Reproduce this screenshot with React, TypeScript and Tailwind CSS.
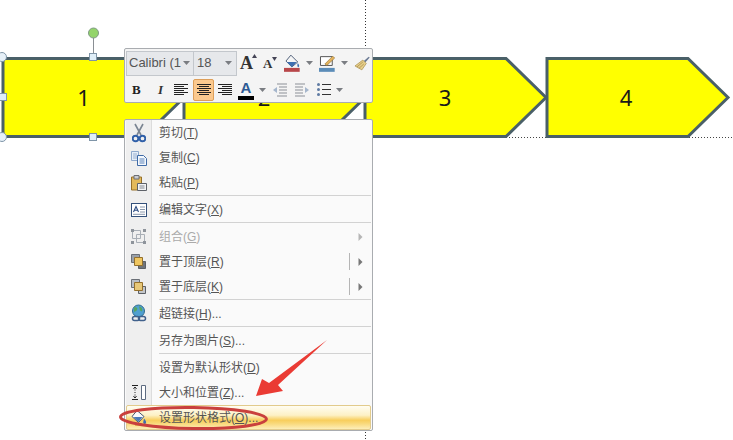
const cjk = { fontFamily: '"Liberation Sans", "Noto Sans CJK SC", sans-serif' }

type MenuItem = {
  label: string
  key: string
  suffix?: string
  icon?: React.ReactNode
  disabled?: boolean
  submenu?: boolean
  split?: boolean
  sep?: boolean
  active?: boolean
}

function CutIcon() {
  return (
    <svg width="14" height="20" viewBox="0 0 14 20">
      <path d="M3 1 L9 12 M11 1 L5 12" stroke="#7b8592" strokeWidth="1.600" fill="none" />
      <circle cx="3.500" cy="15.500" r="2.800" fill="none" stroke="#2f5fa8" strokeWidth="1.900" />
      <circle cx="10.500" cy="15.500" r="2.800" fill="none" stroke="#2f5fa8" strokeWidth="1.900" />
    </svg>
  )
}

function CopyIcon() {
  return (
    <svg width="18" height="16" viewBox="0 0 18 16">
      <path d="M1.500 1.500h7v9h-7z" fill="#e6eef8" stroke="#8fa9cc" />
      <path d="M3 4h4M3 6h4M3 8h4" stroke="#9ab0d0" />
      <path d="M7.500 5.500h6l3 3v7h-9z" fill="#f4f8fd" stroke="#3f6aa6" />
      <path d="M9.500 9h5M9.500 11h5M9.500 13h5" stroke="#5b82b8" />
    </svg>
  )
}

function PasteIcon() {
  return (
    <svg width="18" height="18" viewBox="0 0 18 18">
      <path d="M1.500 3h10v13h-10z" fill="#e3b95a" stroke="#96702a" />
      <path d="M4 1.500h5v3.500h-5z" fill="#c9ccd2" stroke="#6d6f74" />
      <path d="M7.500 9.500h9v7h-9z" fill="#f3f4f6" stroke="#5d6168" />
      <path d="M9.500 12h5M9.500 14h5" stroke="#858a92" />
    </svg>
  )
}

function EditTextIcon() {
  return (
    <svg width="16" height="14" viewBox="0 0 16 14">
      <rect x="0.500" y="0.500" width="15" height="13" fill="#fff" stroke="#33507a" />
      <path d="M2.500 9 L5 3.500 L7.500 9 M3.400 7.200h3.200" stroke="#2c4c82" strokeWidth="1.100" fill="none" />
      <path d="M9 4h5M9 6.500h5M9 9h5M2 11.300h12" stroke="#8a98ac" />
    </svg>
  )
}

function GroupIcon() {
  return (
    <svg width="17" height="17" viewBox="0 0 17 17">
      <path d="M2.500 2.500h8v8h-8zM6.500 6.500h8v8h-8z" fill="none" stroke="#a9afb6" />
      <path d="M1 1h3v3H1zM13 1h3v3h-3zM1 13h3v3H1zM13 13h3v3h-3z" fill="#8e949b" />
    </svg>
  )
}

function LayerIcon({ front }: { front: boolean }) {
  const a = <path d="M1.500 1.500h8v8h-8z" fill={front ? '#9aa0a8' : '#b9bec6'} stroke="#6a6f76" />
  const b = <path d="M4.500 4.500h8v8h-8z" fill={front ? '#efc660' : '#e8c878'} stroke="#94702c" />
  const c = <path d="M8.500 8.500h7v7h-7z" fill={front ? '#6f747b' : '#c3c6ca'} stroke="#5c6066" />
  return (
    <svg width="17" height="17" viewBox="0 0 17 17">
      {front ? a : c}
      {front ? c : a}
      {b}
    </svg>
  )
}

function LinkIcon() {
  return (
    <svg width="18" height="19" viewBox="0 0 18 19">
      <circle cx="8.500" cy="7" r="6" fill="#4f9fd0" stroke="#2f6b90" />
      <path d="M4 3.500c2.500-1 4 .5 3 2.500s-3 .5-3 3.500zM9 2.500c2.500 0 4 2.500 3 5l-2-1z" fill="#57a55e" />
      <rect x="2.500" y="12.500" width="7" height="4" rx="2" fill="none" stroke="#41618c" strokeWidth="1.500" />
      <rect x="8.500" y="12.500" width="7" height="4" rx="2" fill="none" stroke="#41618c" strokeWidth="1.500" />
    </svg>
  )
}

function SizeIcon() {
  return (
    <svg width="16" height="17" viewBox="0 0 16 17">
      <path d="M10.500 1.500h4v14h-4z" fill="#fff" stroke="#5d6b80" />
      <path d="M4 3v11" stroke="#222" strokeDasharray="1 1.500" />
      <path d="M1 1.500h6M1 15.500h6M2.500 5L4 3l1.500 2M2.500 12L4 14l1.500-2" stroke="#222" fill="none" />
    </svg>
  )
}

function FormatIcon() {
  return (
    <svg width="18" height="18" viewBox="0 0 18 18">
      <path d="M7 1.500 L14 7.500 L8.500 13.500 L2 7.500z" fill="#f8fafc" stroke="#46566e" />
      <path d="M3.500 8 L8.500 13 L12.500 8z" fill="#4a7ab8" />
      <path d="M14 9.500c1.500 2 2.500 3 2 4.500s-3 1-2.800-.8z" fill="#3f6fb0" />
      <path d="M5 15.500h7" stroke="#c8901c" strokeWidth="2" />
    </svg>
  )
}

const menu: MenuItem[] = [
  { label: '剪切', key: 'T', icon: <CutIcon /> },
  { label: '复制', key: 'C', icon: <CopyIcon /> },
  { label: '粘贴', key: 'P', icon: <PasteIcon />, sep: true },
  { label: '编辑文字', key: 'X', icon: <EditTextIcon />, sep: true },
  { label: '组合', key: 'G', icon: <GroupIcon />, disabled: true, submenu: true },
  { label: '置于顶层', key: 'R', icon: <LayerIcon front />, submenu: true, split: true },
  { label: '置于底层', key: 'K', icon: <LayerIcon front={false} />, submenu: true, split: true, sep: true },
  { label: '超链接', key: 'H', suffix: '...', icon: <LinkIcon />, sep: true },
  { label: '另存为图片', key: 'S', suffix: '...', sep: true },
  { label: '设置为默认形状', key: 'D' },
  { label: '大小和位置', key: 'Z', suffix: '...', icon: <SizeIcon /> },
  { label: '设置形状格式', key: 'O', suffix: '...', icon: <FormatIcon />, active: true },
]

function ContextMenu() {
  return (
    <div
      style={cjk}
      className="absolute left-[124px] top-[119px] w-[249px] px-px bg-[#fafafa] border border-[#a9acb0] rounded-[2px] flex flex-col"
    >
      {menu.map(item => (
        <div key={item.key}>
          <div className="flex h-[25px] relative">
            <div className="w-[26px] shrink-0 bg-[#efefef] border-r border-[#dcdcdc] flex items-center justify-center">
              {item.icon}
            </div>
            {item.active && (
              <div className="absolute inset-0 border border-[#e2cb8c] rounded-[2px] bg-[linear-gradient(to_bottom,#fffdf2_0%,#fdf1c6_40%,#f8ce5c_62%,#f9d878_75%,#fdeeb8_100%)]" />
            )}
            {item.active && (
              <div className="absolute left-0 top-0 h-full w-[26px] flex items-center justify-center">{item.icon}</div>
            )}
            <div
              className={`relative flex-1 flex items-center pl-[7px] text-[12px] ${
                item.disabled ? 'text-[#aaaaaa]' : 'text-[#555555]'
              }`}
            >
              <span>
                {item.label}(<span className="underline">{item.key}</span>){item.suffix}
              </span>
              {item.split && <div className="absolute right-[21px] top-[4px] h-[17px] w-px bg-[#b5b5b5]" />}
              {item.submenu && (
                <svg className="absolute right-[8px] top-[9px]" width="5" height="8" viewBox="0 0 5 8">
                  <path d="M0.500 0 L4.500 4 L0.500 8z" fill={item.disabled ? '#b5b5b5' : '#777'} />
                </svg>
              )}
            </div>
          </div>
          {item.sep && (
            <div className="flex h-[2px]">
              <div className="w-[26px] shrink-0 bg-[#efefef] border-r border-[#dcdcdc]" />
              <div className="flex-1 ml-[7px] bg-[#d2d2d2] h-px" />
            </div>
          )}
        </div>
      ))}
    </div>
  )
}

function Caret() {
  return (
    <svg width="7" height="4" viewBox="0 0 7 4" className="shrink-0">
      <path d="M0 0h7L3.500 4z" fill="#7a7d82" />
    </svg>
  )
}

function AlignIcon({ mode }: { mode: 'left' | 'center' | 'right' }) {
  const widths = [14, 10, 14, 10, 14, 10]
  return (
    <svg width="14" height="12" viewBox="0 0 14 12">
      {widths.map((w, i) => {
        const x = mode === 'left' ? 0 : mode === 'right' ? 14 - w : (14 - w) / 2
        return <rect key={i} x={x} y={i * 2} width={w} height="1" fill="#222" />
      })}
    </svg>
  )
}

function IndentIcon({ flip }: { flip?: boolean }) {
  return (
    <svg width="15" height="14" viewBox="0 0 15 14" style={flip ? { transform: 'scaleX(-1)' } : undefined}>
      <path d="M5 1h10M7 4h8M7 7h8M7 10h8M5 13h10" stroke="#8c9097" />
      <path d="M5 4 L1 7 L5 10z" fill="#a5b6cc" />
    </svg>
  )
}

function MiniToolbar() {
  return (
    <div
      style={cjk}
      className="absolute left-[124px] top-[48px] w-[249px] h-[55px] bg-[#f4f4f4] border border-[#a9acb0] rounded-[2px] px-[1px] pt-[1px] flex flex-col"
    >
      <div className="flex items-center h-[26px]">
        <div className="flex items-center justify-between shrink-0 w-[68px] h-[25px] bg-[#e6e8eb] border border-[#c3c7cc] pl-[2px] pr-[3px] text-[13px] text-[#555]">
          <span className="whitespace-nowrap">Calibri (1</span>
          <Caret />
        </div>
        <div className="flex items-center justify-between shrink-0 w-[43px] h-[25px] bg-[#e6e8eb] border border-l-0 border-[#c3c7cc] pl-[3px] pr-[4px] text-[13px] text-[#555]">
          <span>18</span>
          <Caret />
        </div>
        <div className="flex items-center ml-[3px]" style={{ fontFamily: '"Liberation Serif", serif' }}>
          <span className="relative w-[17px] text-[18px] font-bold text-[#333] leading-none">
            A
            <svg className="absolute right-0 top-0" width="5" height="4" viewBox="0 0 5 4"><path d="M2.500 0L5 4H0z" fill="#445" /></svg>
          </span>
          <span className="relative w-[14px] ml-[6px] text-[13px] font-bold text-[#333] leading-none">
            A
            <svg className="absolute right-0 top-0" width="5" height="4" viewBox="0 0 5 4"><path d="M0 0h5L2.500 4z" fill="#445" /></svg>
          </span>
        </div>
        <svg className="ml-[7px]" width="17" height="18" viewBox="0 0 17 18">
          <path d="M7 1 L14 8 L8 13 L2 7z" fill="#f5f5f5" stroke="#4f5f78" />
          <path d="M3 8 L8 13 L13 8z" fill="#3e6fb0" />
          <path d="M14 9c1.500 2 2 3 1 4s-2-1-1-4z" fill="#3e6fb0" />
          <rect x="0" y="14" width="16" height="4" fill="#b8474a" />
        </svg>
        <div className="ml-[5px]"><Caret /></div>
        <svg className="ml-[6px]" width="17" height="18" viewBox="0 0 17 18">
          <path d="M1.500 2.500h12v9h-12z" fill="#fff" stroke="#555" />
          <path d="M6 10 L14 2 L16 4 L8 11.500z" fill="#e4b35c" stroke="#8a6a2a" strokeWidth="0.600" />
          <rect x="0" y="14" width="16" height="4" fill="#5b8cb8" />
        </svg>
        <div className="ml-[6px]"><Caret /></div>
        <svg className="ml-[6px]" width="17" height="17" viewBox="0 0 17 17">
          <path d="M10 6 L15 1.500 L16 2.500 L11.500 7.500z" fill="#6b7a94" />
          <path d="M9 5 L12.500 8.500 L8 15 L1 11z" fill="#e6cf8a" stroke="#a58a48" strokeWidth="0.700" />
          <path d="M3 12 L9 7M5 13.500 L10 9" stroke="#b89a58" />
        </svg>
      </div>
      <div className="flex items-center h-[25px] mt-[1px]">
        <span className="w-[19px] ml-[6px] text-[13px] font-bold text-[#222] leading-none" style={{ fontFamily: '"Liberation Serif", serif' }}>B</span>
        <span className="w-[14px] ml-[7px] text-[13px] italic font-bold text-[#333] leading-none" style={{ fontFamily: '"Liberation Serif", serif' }}>I</span>
        <div className="ml-[2px]"><AlignIcon mode="left" /></div>
        <div className="ml-[5px] w-[21px] h-[22px] flex items-center justify-center bg-[#fbc98e] border border-[#dd9f5a] rounded-[2px]">
          <AlignIcon mode="center" />
        </div>
        <div className="ml-[4px]"><AlignIcon mode="right" /></div>
        <span className="relative ml-[6px] w-[16px] h-[20px] flex flex-col items-center text-[15px] font-bold leading-[16px] text-[#2d5a94]" style={{ fontFamily: '"Liberation Sans", sans-serif' }}>
          A
          <span className="w-full h-[4px] bg-black" />
        </span>
        <div className="ml-[5px]"><Caret /></div>
        <div className="ml-[6px]"><IndentIcon /></div>
        <div className="ml-[8px]"><IndentIcon flip /></div>
        <svg className="ml-[7px]" width="14" height="13" viewBox="0 0 14 13">
          <circle cx="1.500" cy="1.500" r="1.500" fill="#5f7ba3" />
          <circle cx="1.500" cy="6.500" r="1.500" fill="#5f7ba3" />
          <circle cx="1.500" cy="11.500" r="1.500" fill="#5f7ba3" />
          <path d="M5 1.500h9M5 6.500h9M5 11.500h9" stroke="#333" />
        </svg>
        <div className="ml-[5px]"><Caret /></div>
      </div>
    </div>
  )
}

function Slide() {
  const arrows = [3, 184, 365, 547]
  return (
    <svg className="absolute inset-0" width="733" height="440" viewBox="0 0 733 440">
      <path d="M365.500 0V48" stroke="#333" strokeDasharray="1 2" />
      <path d="M506 137.500H733" stroke="#444" strokeDasharray="1 2" />
      <path d="M365.500 103V119" stroke="#333" strokeDasharray="1 2" />
      <path d="M365.500 432V440" stroke="#333" strokeDasharray="1 2" />
      {arrows.map(x => (
        <path
          key={x}
          d={`M${x} 58.500H${x + 141}L${x + 181} 97.500L${x + 141} 136.500H${x}z`}
          fill="#ffff00"
          stroke="#4a6068"
          strokeWidth="3"
          strokeLinejoin="miter"
        />
      ))}
      <path d="M93.500 38V57" stroke="#8a8f94" />
      <circle cx="93.500" cy="33" r="5" fill="#93d46a" stroke="#7f9a84" />
      {[[93, 57], [3, 97], [93, 137]].map(([x, y]) => (
        <rect key={`${x}-${y}`} x={x - 3.500} y={y - 3.500} width="7" height="7" fill="#dfeef8" stroke="#7f95a8" />
      ))}
      {[[2, 57], [2, 137]].map(([x, y]) => (
        <circle key={`${x}-${y}`} cx={x} cy={y} r="4.500" fill="#e6f0f8" stroke="#7f95a8" />
      ))}
      <g fontFamily="'Noto Sans', sans-serif" fontSize="22" fill="#1a1a1a" textAnchor="middle">
        <text x="83.500" y="105.500">1</text>
        <text x="264" y="105.500">2</text>
        <text x="445" y="105.500">3</text>
        <text x="626" y="105.500">4</text>
      </g>
    </svg>
  )
}

function Annotation() {
  return (
    <svg className="absolute inset-0 pointer-events-none" width="733" height="440" viewBox="0 0 733 440">
      <path d="M327 340 L278 385 L283 391 L256 396 L262 379 L269 383z" fill="#ea3b34" />
      <ellipse cx="193.500" cy="418" rx="73" ry="10.500" fill="none" stroke="#c9403d" strokeWidth="3" transform="rotate(0.800 193.500 418)" />
    </svg>
  )
}

export default function App() {
  return (
    <div className="relative w-[733px] h-[440px] overflow-hidden bg-white">
      <Slide />
      <MiniToolbar />
      <ContextMenu />
      <Annotation />
    </div>
  )
}
